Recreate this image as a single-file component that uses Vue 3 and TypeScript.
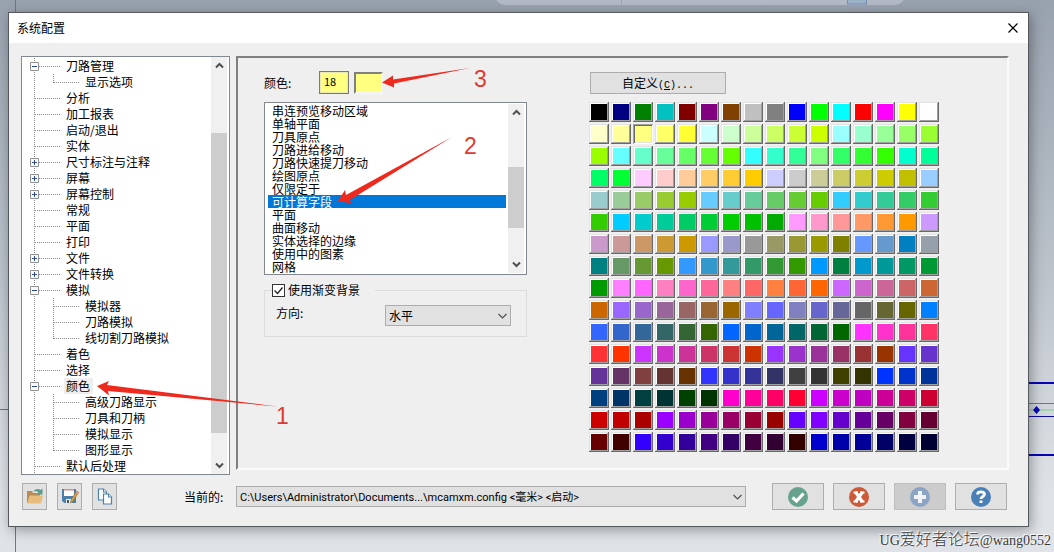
<script setup lang="ts">
import { ref } from 'vue'

interface TreeRow {
  label: string
  level: 0 | 1
  toggle?: 'plus' | 'minus'
  last?: boolean
}

const tree: TreeRow[] = [
  { label: '刀路管理', level: 0, toggle: 'minus' },
  { label: '显示选项', level: 1, last: true },
  { label: '分析', level: 0 },
  { label: '加工报表', level: 0 },
  { label: '启动/退出', level: 0 },
  { label: '实体', level: 0 },
  { label: '尺寸标注与注释', level: 0, toggle: 'plus' },
  { label: '屏幕', level: 0, toggle: 'plus' },
  { label: '屏幕控制', level: 0, toggle: 'plus' },
  { label: '常规', level: 0 },
  { label: '平面', level: 0 },
  { label: '打印', level: 0 },
  { label: '文件', level: 0, toggle: 'plus' },
  { label: '文件转换', level: 0, toggle: 'plus' },
  { label: '模拟', level: 0, toggle: 'minus' },
  { label: '模拟器', level: 1 },
  { label: '刀路模拟', level: 1 },
  { label: '线切割刀路模拟', level: 1, last: true },
  { label: '着色', level: 0 },
  { label: '选择', level: 0 },
  { label: '颜色', level: 0, toggle: 'minus' },
  { label: '高级刀路显示', level: 1 },
  { label: '刀具和刀柄', level: 1 },
  { label: '模拟显示', level: 1 },
  { label: '图形显示', level: 1, last: true },
  { label: '默认后处理', level: 0 },
]
const currentPage = ref('颜色')

const items = [
  '串连预览移动区域', '单轴平面', '刀具原点', '刀路进给移动', '刀路快速提刀移动',
  '绘图原点', '仅限定于', '可计算字段', '平面', '曲面移动', '实体选择的边缘',
  '使用中的图素', '网格',
]
const currentItem = ref('可计算字段')

const palette = `
000000 000080 008000 00c0c0 800000 800080 804000 c0c0c0 808080 0000ff 00ff00 00ffff ff0000 ff00ff ffff00 ffffff
ffffcc ffff99 ffff80 ffff66 ffff33 ccffff ccffcc ccff99 ccff66 ccff33 ccff00 99ffff 99ffcc 99ff99 99ff66 99ff33
99ff00 66ffff 66ffcc 66ff99 66ff66 66ff33 66ff00 33ffff 33ffcc 33ff99 80ff80 33ff66 33ff33 33ff00 00ffcc 00ff99
00ff66 00ff33 ffccff ffcccc ffcc99 ffcc66 ffcc33 ffcc00 ccccff cccccc cccc99 cccc66 cccc33 cccc00 c0c000 99ccff
99cccc 99cc99 99cc66 99cc33 99cc00 66ccff 66cccc 66cc99 66cc66 66cc33 66cc00 33ccff 33cccc 33cc99 33cc66 33cc33
33cc00 00ccff 00cccc 00cc99 00cc66 00cc33 00cc00 00c000 00aa00 ff99ff ff99cc ff9999 ff9966 ff9933 ff9900 cc99ff
cc99cc cc9999 cc9966 cc9933 cc9900 9999ff 9999cc 999999 999966 999933 999900 808000 6699ff 6699cc 0080c0 96a0aa
008080 669966 669933 669900 3399ff 3399cc 339999 339966 339933 339900 0099ff 008040 0099cc 009999 009966 009933
009900 ff80ff ff66ff ff80c0 ff66cc ff6699 ff8080 ff6666 ff8040 ff6633 ff6600 cc66ff cc66cc cc6699 cc6666 cc6633
cc6600 9966ff 9966cc 996699 996666 996633 996600 8080ff 6666ff 8080c0 6666cc 666699 666666 666633 666600 0080ff
3366ff 3366cc 336699 336666 336633 336600 0066ff 0066cc 006699 006666 006633 006600 ff33ff ff33cc ff3399 ff3366
ff3333 ff3300 cc33ff cc33cc cc3399 cc3366 cc3333 cc3300 9933ff 9933cc 993399 993366 993333 993300 6633ff 6633cc
663399 663366 804040 663333 663300 3333ff 3333cc 333399 333366 404040 333333 404000 333300 0033ff 0033cc 003399
004080 003366 004040 003333 004000 003300 ff00cc ff0099 ff0066 ff0033 cc00ff cc00cc c000c0 cc0099 cc0066 cc0033
cc0000 c00000 aa0000 9900ff 9900cc 990099 990066 990033 990000 6600ff 8000ff 6600cc 660099 660066 800040 660033
660000 400000 3300ff 3300cc 330099 400080 330066 400040 330033 330000 0000cc 0000aa 000099 000066 000040 000033
`.trim().split(/\s+/).map((hex) => '#' + hex)
const colorIndex = ref(18)
const gradient = ref(true)
const direction = ref('水平')
const configFile = ref('C:\\Users\\Administrator\\Documents...\\mcamxm.config <毫米> <启动>')
</script>

<template>
  <div class="desktop">
    <svg class="scene" aria-hidden="true">
      <rect x="495" y="-20" width="410" height="25" rx="10" fill="#c6cad3" fill-opacity="0.6" />
      <path d="M621.500 0V5" stroke="#9fa6b0" />
      <rect x="847.500" y="-4" width="19" height="8" fill="#9cb3ca" stroke="#7290b4" />
      <path d="M15.500 0V552" stroke="#73787e" />
      <path d="M0 409.500H12" stroke="#5c7d68" />
      <path d="M1020 383H1054M1020 455H1054" stroke="#0606b4" stroke-width="2" />
      <path d="M1020 403.500H1054" stroke="#6d6dc0" />
      <path d="M1020 410H1054" stroke="#a5d3ae" stroke-width="2" />
      <path d="M1020 416.500H1054" stroke="#0a0a9c" />
      <path d="M1036.500 406l3.500 4-3.500 4-3.500-4z" fill="#0606b4" />
    </svg>

    <main class="dialog" role="dialog" aria-labelledby="title">
      <header class="titlebar">
        <h1 id="title">系统配置</h1>
        <button class="close" aria-label="关闭">
          <svg width="12" height="12" viewBox="0 0 12 12"><path d="M1.500 1.500l9 9M10.500 1.500l-9 9" stroke="#000" stroke-width="1.200" /></svg>
        </button>
      </header>

      <div class="content">
        <nav class="tree" aria-label="配置页">
          <ul>
            <li v-for="(row, i) in tree" :key="i" :class="['row', 'level' + row.level, { last: row.last }]">
              <button v-if="row.toggle" class="toggle" :aria-label="row.toggle === 'plus' ? '展开' : '折叠'">
                <svg width="7" height="7" viewBox="0 0 7 7">
                  <path d="M1 3.500h5" stroke="#2f4c86" />
                  <path v-if="row.toggle === 'plus'" d="M3.500 1v5" stroke="#2f4c86" />
                </svg>
              </button>
              <button :class="['node', { current: currentPage === row.label }]" @click="currentPage = row.label">{{ row.label }}</button>
            </li>
          </ul>
          <div class="scrollbar tree-scroll">
            <button class="arrow" aria-label="向上"><svg width="9" height="7" viewBox="0 0 9 7"><path d="M1 5.500l3.500-3.500 3.500 3.500" /></svg></button>
            <span class="before"></span><span class="thumb"></span><span class="after"></span>
            <button class="arrow" aria-label="向下"><svg width="9" height="7" viewBox="0 0 9 7"><path d="M1 1.500l3.500 3.500 3.500-3.500" /></svg></button>
          </div>
        </nav>

        <section class="panel">
          <div class="settings">
            <div class="color-row">
              <label for="color">颜色:</label>
              <input id="color" v-model.number="colorIndex" type="text" />
              <button class="preview" aria-label="当前颜色" :style="{ background: palette[colorIndex] }"></button>
            </div>

            <div class="listbox">
              <ul>
                <li v-for="item in items" :key="item">
                  <button :class="{ selected: item === currentItem }" @click="currentItem = item">{{ item }}</button>
                </li>
              </ul>
              <div class="scrollbar list-scroll">
                <button class="arrow" aria-label="向上"><svg width="9" height="7" viewBox="0 0 9 7"><path d="M1 5.500l3.500-3.500 3.500 3.500" /></svg></button>
                <span class="before"></span><span class="thumb"></span><span class="after"></span>
                <button class="arrow" aria-label="向下"><svg width="9" height="7" viewBox="0 0 9 7"><path d="M1 1.500l3.500 3.500 3.500-3.500" /></svg></button>
              </div>
            </div>

            <fieldset>
              <legend>
                <label class="check"><input v-model="gradient" type="checkbox" />使用渐变背景</label>
              </legend>
              <div class="direction">
                <label for="direction">方向:</label>
                <span class="combo">
                  <select id="direction" v-model="direction"><option>水平</option></select>
                  <svg width="9" height="6" viewBox="0 0 9 6"><path d="M.5 1l4 4 4-4" /></svg>
                </span>
              </div>
            </fieldset>
          </div>

          <div class="colors">
            <button class="custom">自定义<span>(<u>C</u>)...</span></button>
            <div class="palette">
              <button
                v-for="(color, i) in palette"
                :key="i"
                :class="['swatch', { chosen: i === colorIndex }]"
                :style="{ backgroundColor: color }"
                :aria-label="color"
                @click="colorIndex = i"
              ></button>
            </div>
          </div>
        </section>
      </div>

      <footer class="footer">
        <div class="tools">
          <button class="tool" aria-label="打开">
            <svg width="18" height="17" viewBox="0 0 18 17">
              <path d="M1 3h5l1 2h7v10H1z" fill="#b88a55" />
              <path d="M1 15.500L3.500 7.500h13.500l-2 8z" fill="#e8bd7c" />
              <path d="M7.500 3.500C9 .8 12.500.4 14.500 2L16.500.5v6h-6l2-2C11 3 9.500 3 7.500 3.500z" fill="#5f9c8c" />
            </svg>
          </button>
          <button class="tool" aria-label="保存">
            <svg width="18" height="17" viewBox="0 0 18 17">
              <path d="M1 1h14v14H3.500L1 13z" fill="#4d7fa9" />
              <path d="M3 1h10v7H3z" fill="#fff" /><path d="M3 1h10v1.500H3z" fill="#df8e83" />
              <path d="M5 11h6v4H5z" fill="#e9eef2" /><path d="M6 12h2v3H6z" fill="#44525e" />
              <path d="M15.500 3L17.500 4.500 12 13.500 9.500 15 10 12z" fill="#d6a43b" stroke="#7d602b" stroke-width=".6" />
              <path d="M15.500 3L17.500 4.500 16.800 5.700 14.800 4.200z" fill="#e28c8b" />
            </svg>
          </button>
          <button class="tool" aria-label="复制">
            <svg width="16" height="17" viewBox="0 0 16 17" fill="#fff" stroke="#4c83ab" stroke-width="1.200">
              <path d="M1.500 1h5l3 3v8h-8z" /><path d="M6.500 1v3h3" />
              <path d="M6.500 6h5l3 3v7h-8z" /><path d="M11.500 6v3h3" />
            </svg>
          </button>
        </div>
        <label class="file-label" for="file">当前的:</label>
        <span class="combo file">
          <select id="file" v-model="configFile"><option>{{ configFile }}</option></select>
          <svg width="9" height="6" viewBox="0 0 9 6"><path d="M.5 1l4 4 4-4" /></svg>
        </span>
        <div class="actions">
          <button aria-label="确定">
            <svg width="20" height="20" viewBox="0 0 20 20"><circle cx="10" cy="10" r="10" fill="#66a28d" /><path d="M4.500 10.500l4 3.500 7-7.500" fill="none" stroke="#fff" stroke-width="3.200" /></svg>
          </button>
          <button aria-label="取消">
            <svg width="20" height="20" viewBox="0 0 20 20"><circle cx="10" cy="10" r="10" fill="#cc5a37" /><path d="M6.500 5l7 10M13.500 5l-7 10" stroke="#fff" stroke-width="3.200" /><path d="M4.500 5.500h4.500M11 5.500h4.500M4.500 14.500h4.500M11 14.500h4.500" stroke="#fff" stroke-width="1.800" /></svg>
          </button>
          <button aria-label="应用" disabled>
            <svg width="20" height="20" viewBox="0 0 20 20"><circle cx="10" cy="10" r="10" fill="#8ba4c3" /><path d="M10 4v12M4 10h12" stroke="#f0f2f5" stroke-width="4" /></svg>
          </button>
          <button aria-label="帮助">
            <svg width="20" height="20" viewBox="0 0 20 20"><circle cx="10" cy="10" r="10" fill="#4a80b8" /><path d="M6.500 7.500C6.500 4 13.500 4 13.500 7.300 13.500 9.500 10 9.500 10 12" fill="none" stroke="#fff" stroke-width="2.800" /><path d="M8.500 13.500h3v2.500h-3z" fill="#fff" /></svg>
          </button>
        </div>
      </footer>
    </main>

    <svg class="marks" aria-hidden="true">
      <g fill="#ee2a1e">
        <path d="M97 386l12-5-2 4 170 21.500-169-15.500 1 4.500z" />
        <path d="M338 201l7-11 1 5 106-58-103 63.500 3 3z" />
        <path d="M382 82.500l11-7 0 4 77-11.500-76 15.500 0 4z" />
      </g>
      <g fill="#de3a30" font-size="23">
        <text x="276" y="424">1</text>
        <text x="464" y="154">2</text>
        <text x="474" y="87">3</text>
      </g>
    </svg>
    <div class="watermark"><span>UG</span>爱好者论坛<span>@wang0552</span></div>
  </div>
</template>

<style>
body { margin: 0; }
</style>

<style scoped>
.desktop {
  position: relative;
  box-sizing: border-box;
  min-height: 100vh;
  padding: 12px 25px 25px 8px;
  overflow: hidden;
  background: linear-gradient(#98a2ae, #bcc3cb 50%, #dfe3e7 90%);
  font: 12px/16px "Noto Sans CJK SC", sans-serif;
  color: #000;
}
.desktop *, .desktop *::before { box-sizing: border-box; }
.scene, .marks {
  position: absolute;
  inset: 0;
  width: 100%;
  height: 100%;
  pointer-events: none;
}
.marks { font-family: "Liberation Sans", Arial, sans-serif; }
button, input, select { font: inherit; color: inherit; margin: 0; padding: 0; }
ul { list-style: none; margin: 0; padding: 0; }
svg { display: block; }

.dialog {
  position: relative;
  border: 1px solid #55585c;
  background: #efefef;
  box-shadow: 2px 3px 12px rgba(0, 0, 0, 0.35);
}
.titlebar {
  display: flex;
  align-items: center;
  justify-content: space-between;
  height: 30px;
  padding: 0 8px;
  background: #fff;
}
.titlebar h1 { margin: 0; font-size: 12px; font-weight: 400; }
.close { border: 0; background: none; padding: 1px; }

.content {
  display: grid;
  grid-template-columns: 209px 1fr;
  align-items: start;
  gap: 6px;
  padding: 13px 19px 0 12px;
}

.tree {
  display: flex;
  border: 1px solid #828790;
  background: #fff;
  padding-right: 2px;
}
.tree ul { flex: 1; padding-top: 1px; }
.row {
  --dots-x: repeating-linear-gradient(to right, #8c8c8c 0 1px, transparent 1px 2px);
  --dots-y: repeating-linear-gradient(to bottom, #8c8c8c 0 1px, transparent 1px 2px);
  display: flex;
  align-items: center;
  height: 16px;
  background-repeat: no-repeat;
}
.level0 {
  background-image: var(--dots-y), var(--dots-x);
  background-position: 12px 0, 13px 8px;
  background-size: 1px 16px, 26px 1px;
}
.level1 {
  background-image: var(--dots-y), var(--dots-y), var(--dots-x);
  background-position: 12px 0, 31px 0, 32px 8px;
  background-size: 1px 16px, 1px 16px, 26px 1px;
}
.level1.last { background-size: 1px 16px, 1px 9px, 26px 1px; }
.toggle {
  width: 9px;
  height: 9px;
  margin: 1px -17px 0 8px;
  border: 1px solid #8f8f8f;
  border-radius: 1px;
  background: #fafafa;
}
.node {
  height: 16px;
  margin-left: 42px;
  padding: 0 3px 0 2px;
  border: 0;
  background: none;
  line-height: 16px;
  white-space: nowrap;
}
.level1 .node { margin-left: 61px; }
.node.current { background: #efefef; }

.scrollbar { display: flex; flex-direction: column; width: 16px; background: #f0f0f0; }
.scrollbar .thumb { background: #cdcdcd; }
.arrow { display: grid; place-items: center; height: 17px; border: 0; background: none; }
.arrow path { fill: none; stroke: #505050; stroke-width: 2; }
.tree-scroll .before { flex: 59; }
.tree-scroll .thumb { flex: 297; }
.tree-scroll .after { flex: 24; }
.list-scroll .before { flex: 46; }
.list-scroll .thumb { flex: 61; }
.list-scroll .after { flex: 28; }

.panel {
  display: flex;
  gap: 62px;
  padding: 13px 0 16px 26px;
  border: 2px solid;
  border-color: #808080 #fbfbfb #fbfbfb #808080;
}
.settings { width: 263px; }
.color-row { display: flex; align-items: center; height: 23px; }
.color-row label { width: 55px; }
.color-row input {
  width: 30px;
  height: 23px;
  padding: 0 0 3px 4px;
  border: 1px solid #7a7a7a;
  outline: 1px solid #e8e8b0;
  outline-offset: -2px;
  background: #ffff80;
  font-size: 11px;
}
.preview {
  width: 29px;
  height: 22px;
  margin-left: 5px;
  border: 2px solid;
  border-color: #808080 #f4f4f4 #f4f4f4 #808080;
}
.listbox {
  display: flex;
  margin-top: 8px;
  padding: 1px 2px 1px 3px;
  border: 1px solid #828790;
  background: #fff;
}
.listbox ul { flex: 1; padding-right: 2px; }
.listbox li { height: 13px; }
.listbox li button {
  display: block;
  width: 100%;
  height: 13px;
  padding-left: 4px;
  border: 0;
  background: none;
  text-align: left;
  line-height: 13px;
}
.listbox li button.selected { background: #0078d7; color: #fff; }

fieldset { margin: 7px 0 0; padding: 7px 15px 10px 11px; border: 1px solid #dcdcdc; }
legend { margin-left: -4px; padding: 0 15px 0 0; }
.check { display: flex; align-items: center; gap: 3px; }
.check input {
  appearance: none;
  width: 13px;
  height: 13px;
  border: 1px solid #333;
  background: #fff;
}
.check input:checked {
  background: #fff url("data:image/svg+xml,%3Csvg xmlns='http://www.w3.org/2000/svg' viewBox='0 0 11 11'%3E%3Cpath d='M1.500 5.500l3 3 5-6' fill='none' stroke='%23222' stroke-width='1.300'/%3E%3C/svg%3E");
}
.direction { display: flex; justify-content: space-between; }
.combo { display: grid; align-items: center; width: 126px; }
.combo select {
  grid-area: 1 / 1;
  appearance: none;
  width: 100%;
  height: 21px;
  padding: 0 20px 0 3px;
  border: 1px solid #adadad;
  border-radius: 0;
  background: #e1e1e1;
}
.combo svg { grid-area: 1 / 1; justify-self: end; margin-right: 4px; pointer-events: none; }
.combo path { fill: none; stroke: #505050; stroke-width: 1.2; }

.custom {
  display: block;
  width: 136px;
  height: 22px;
  margin: 0 1px 8px;
  border: 1px solid #adadad;
  background: #e1e1e1;
}
.custom span { font: 10px "Liberation Mono", monospace; }
.colors { padding-top: 1px; }
.palette { display: grid; grid-template-columns: repeat(16, 20px); gap: 2px; }
.swatch {
  height: 20px;
  border: 0;
  box-shadow: inset -1px -1px #696969, inset 1px 1px #e3e3e3, inset -2px -2px #a0a0a0, inset 2px 2px #fff;
}
.swatch.chosen { box-shadow: inset 1px 1px #a0a0a0, inset -1px -1px #fff, inset 2px 2px #696969, inset -2px -2px #e3e3e3; }

.footer { display: flex; align-items: center; padding: 8px 21px 16px 13px; }
.tools { display: flex; gap: 10px; }
.tool { display: grid; place-items: center; width: 25px; height: 27px; border: 1px solid #adadad; background: #e1e1e1; }
.file-label { margin-left: 67px; width: 52px; }
.file { flex: 1; }
.file select { padding-top: 2px; font-family: Roboto, "Noto Sans CJK SC", sans-serif; font-size: 11px; }
.actions { display: flex; gap: 9px; margin-left: 26px; }
.actions button { display: grid; place-items: center; width: 52px; height: 27px; border: 1px solid #adadad; background: #e1e1e1; }
.actions button:disabled { background: #cccccc; border-color: #bfbfbf; }

.watermark {
  position: absolute;
  right: 3px;
  bottom: 1px;
  font-size: 16px;
  line-height: 20px;
  color: #3c3c3c;
  font-weight: 300;
  text-shadow: -1px -1px #fff;
}
.watermark span { font-family: "Liberation Serif", serif; font-size: 14px; }
</style>
